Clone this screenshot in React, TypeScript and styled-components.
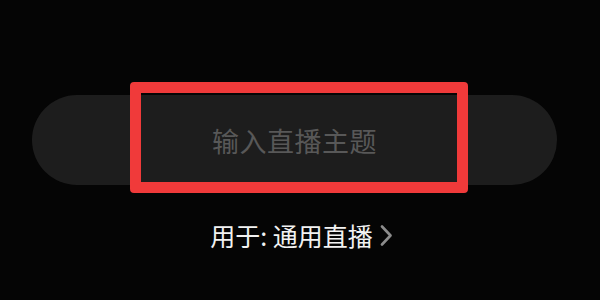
import React from "react";
import styled, { createGlobalStyle } from "styled-components";

const Global = createGlobalStyle`
  html, body { margin: 0; padding: 0; background: #050505; }
  body { font-family: "Noto Sans CJK SC", "Noto Sans", sans-serif; }
`;

const Screen = styled.div`
  position: relative;
  width: 600px;
  height: 300px;
  background: #050505;
  display: flex;
  flex-direction: column;
  align-items: stretch;
  padding-top: 95px;
  box-sizing: border-box;
`;

const InputPill = styled.div`
  margin: 0 43px 0 32px;
  height: 90px;
  border-radius: 45px;
  background: #1d1d1d;
  display: flex;
  align-items: center;
  justify-content: center;
`;

const Placeholder = styled.span`
  font-size: 27px;
  font-weight: 400;
  color: #585858;
  letter-spacing: 0.5px;
  line-height: 1;
`;

const Caption = styled.div`
  margin-top: 38px;
  display: flex;
  align-items: center;
  justify-content: center;
  gap: 7px;
  padding-left: 3px;
  color: #f2f2f2;
  font-size: 25px;
  line-height: 1;
`;

const Highlight = styled.div`
  position: absolute;
  left: 130px;
  top: 82px;
  width: 338px;
  height: 111px;
  box-sizing: border-box;
  border: 11px solid #f03a3a;
  border-radius: 4px;
  pointer-events: none;
`;

const Chevron = () => (
  <svg width="13" height="21" viewBox="0 0 13 21" fill="none">
    <path d="M2 1.5 L10.5 10.5 L2 19.5" stroke="#8c8c8c" strokeWidth="2.6" strokeLinecap="round" strokeLinejoin="round" />
  </svg>
);

export default function App() {
  return (
    <>
      <Global />
      <Screen>
        <InputPill>
          <Placeholder>输入直播主题</Placeholder>
        </InputPill>
        <Caption>
          <span>用于: 通用直播</span>
          <Chevron />
        </Caption>
        <Highlight />
      </Screen>
    </>
  );
}
